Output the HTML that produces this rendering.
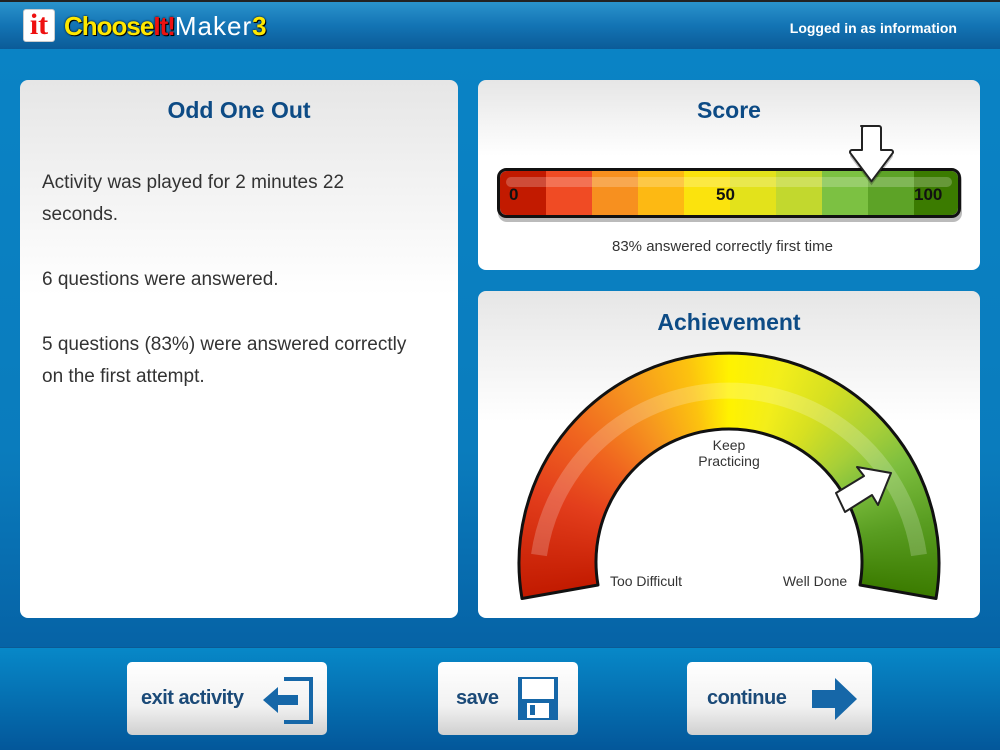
<!DOCTYPE html>
<html><head><meta charset="utf-8"><style>
*{margin:0;padding:0;box-sizing:border-box}
html,body{width:1000px;height:750px;overflow:hidden}
body{position:relative;font-family:"Liberation Sans",sans-serif;background:linear-gradient(#0a84c6 0%,#0a7cbd 60%,#0663a6 86%)}
.hdr{position:absolute;left:0;top:0;width:1000px;height:49px;background:linear-gradient(#2a93cc,#1374b4 50%,#0b5b98);border-top:2px solid #222}
.panel{position:absolute;background:linear-gradient(#e6e6e6,#fff 40%);border-radius:8px}
.ttl{position:absolute;left:0;right:0;text-align:center;color:#0d4b85;font-weight:bold;font-size:23px}
.ftr{position:absolute;left:0;top:647px;width:1000px;height:103px;background:linear-gradient(#0788c8,#03579a);border-top:1px solid #0b5a94}
.btn{position:absolute;top:662px;height:73px;border-radius:5px;background:linear-gradient(#fff,#f2f2f2 60%,#d0d0d0);color:#1b4a78;font-weight:bold;font-size:20px;letter-spacing:-0.5px}
.btn span{position:absolute;top:25px}
p.t{position:absolute;left:42px;font-size:19px;color:#333;line-height:32px}
</style></head><body>
<div class="hdr">
<div style="position:absolute;left:23px;top:7px;width:32px;height:33px;background:#fff;border-radius:3px;border:1px solid #ccc;color:#e11;font-weight:bold;font-size:30px;line-height:30px;text-align:center;font-family:'Liberation Serif',serif">it</div>
<div style="position:absolute;left:64px;top:9px;font-size:26px;font-weight:bold;color:#ffe800;letter-spacing:-1px;text-shadow:0 0 2px #000,1px 1px 0 #000">Choose<span style="color:#e11">It!</span><span style="color:#fff;font-weight:normal;letter-spacing:1px;text-shadow:none">Maker</span>3</div>
<div style="position:absolute;right:43px;top:18px;color:#fff;font-weight:bold;font-size:14px">Logged in as information</div>
</div>

<div class="panel" style="left:20px;top:80px;width:438px;height:538px">
<div class="ttl" style="top:17px">Odd One Out</div>
<p class="t" style="top:87px;left:22px">Activity was played for 2 minutes 22<br>seconds.</p>
<p class="t" style="top:184px;left:22px">6 questions were answered.</p>
<p class="t" style="top:249px;left:22px">5 questions (83%) were answered correctly<br>on the first attempt.</p>
</div>

<div class="panel" style="left:478px;top:80px;width:502px;height:190px">
<div class="ttl" style="top:17px">Score</div>
<div style="position:absolute;left:134px;top:158px;font-size:15px;color:#333">83% answered correctly first time</div>
</div>
<svg style="position:absolute;left:0;top:0" width="1000" height="750">
<defs><clipPath id="bc"><rect x="500" y="171" width="458" height="44" rx="7"/></clipPath></defs>
<rect x="498" y="171" width="464" height="51" rx="9" fill="#777" opacity=".5"/>
<g clip-path="url(#bc)">
<rect x="500" y="171" width="46" height="44" fill="#c21a00"/>
<rect x="546" y="171" width="46" height="44" fill="#f04b24"/>
<rect x="592" y="171" width="46" height="44" fill="#f7901f"/>
<rect x="638" y="171" width="46" height="44" fill="#fdb913"/>
<rect x="684" y="171" width="46" height="44" fill="#fbe30d"/>
<rect x="730" y="171" width="46" height="44" fill="#e3e21b"/>
<rect x="776" y="171" width="46" height="44" fill="#c2d82e"/>
<rect x="822" y="171" width="46" height="44" fill="#7cc142"/>
<rect x="868" y="171" width="46" height="44" fill="#5da327"/>
<rect x="914" y="171" width="46" height="44" fill="#3b7b00"/>
<rect x="506" y="177" width="446" height="10" rx="5" fill="#fff" opacity=".22"/>
</g>
<rect x="498.5" y="169.5" width="461" height="47" rx="8" fill="none" stroke="#111" stroke-width="3"/>
<g font-weight="bold" font-size="17" fill="#111"><text x="509" y="200">0</text><text x="716" y="200">50</text><text x="914" y="200">100</text></g>
<path d="M861,130 h18 a2,2 0 0 1 2,2 v22 h10 a2,2 0 0 1 1.5,3.3 l-21,28 l-21,-28 a2,2 0 0 1 1.5,-3.3 h10 v-22 a2,2 0 0 1 2,-2z" fill="#000" opacity=".25"/>
<path d="M861,126 h18 a2,2 0 0 1 2,2 v22 h10 a2,2 0 0 1 1.5,3.3 l-21,28 l-21,-28 a2,2 0 0 1 1.5,-3.3 h10 v-22 a2,2 0 0 1 2,-2z" fill="#fff" stroke="#222" stroke-width="2" stroke-linejoin="round"/>
</svg>

<div class="panel" style="left:478px;top:291px;width:502px;height:327px">
<div class="ttl" style="top:18px">Achievement</div>
</div>
<div style="position:absolute;left:519px;top:352px;width:420px;height:420px;border-radius:50%;background:conic-gradient(from -100deg,#c21a00 0deg,#e33e1c 30deg,#f0651f 50deg,#f6961f 70deg,#fcc20f 88deg,#fff200 100deg,#f3ee1a 115deg,#d7e021 130deg,#a7cf38 148deg,#7ebf3f 160deg,#5a9e22 178deg,#3b7b00 200deg,#3b7b00 360deg);clip-path:path('M3,246.5 A210,210 0 1,1 417,246.5 L341,233 A133,133 0 1,0 79,233 Z')"></div>
<svg style="position:absolute;left:0;top:0" width="1000" height="750">
<path d="M539,555 A192,192 0 0 1 919,555" fill="none" stroke="#fff" stroke-opacity=".2" stroke-width="16"/>
<path d="M522,598.5 A210,210 0 1,1 936,598.5 L860,585 A133,133 0 1,0 598,585 Z" fill="none" stroke="#111" stroke-width="3" stroke-linejoin="round"/>
<path d="M836,493 L864,476 L857,467 L891,473 L878,505 L872,495 L845,512 Z" fill="#fff" stroke="#222" stroke-width="2" stroke-linejoin="round"/>
<g font-size="14" fill="#333" text-anchor="middle"><text x="729" y="450">Keep</text><text x="729" y="466">Practicing</text><text x="646" y="586">Too Difficult</text><text x="815" y="586">Well Done</text></g>
</svg>

<div class="ftr"></div>
<div class="btn" style="left:127px;width:200px"><span style="left:14px">exit activity</span>
<svg style="position:absolute;left:134px;top:14px" width="56" height="48"><path d="M23,3 h27 v43 h-27" fill="none" stroke="#1667a8" stroke-width="4"/><path d="M2,24 l15,-13 v8 h20 v10 h-20 v8z" fill="#1667a8"/></svg></div>
<div class="btn" style="left:438px;width:140px"><span style="left:18px">save</span>
<svg style="position:absolute;left:79px;top:14px" width="42" height="45"><rect x="1" y="1" width="40" height="43" fill="#1667a8"/><rect x="5" y="3" width="32" height="20" fill="#fff"/><rect x="10" y="27" width="22" height="15" fill="#fff"/><rect x="13" y="29" width="5" height="10" fill="#1667a8"/></svg></div>
<div class="btn" style="left:687px;width:185px"><span style="left:20px">continue</span>
<svg style="position:absolute;left:124px;top:15px" width="48" height="44"><path d="M1,13 h23 v-12 l22,21 l-22,21 v-12 h-23z" fill="#1667a8"/></svg></div>
</body></html>
